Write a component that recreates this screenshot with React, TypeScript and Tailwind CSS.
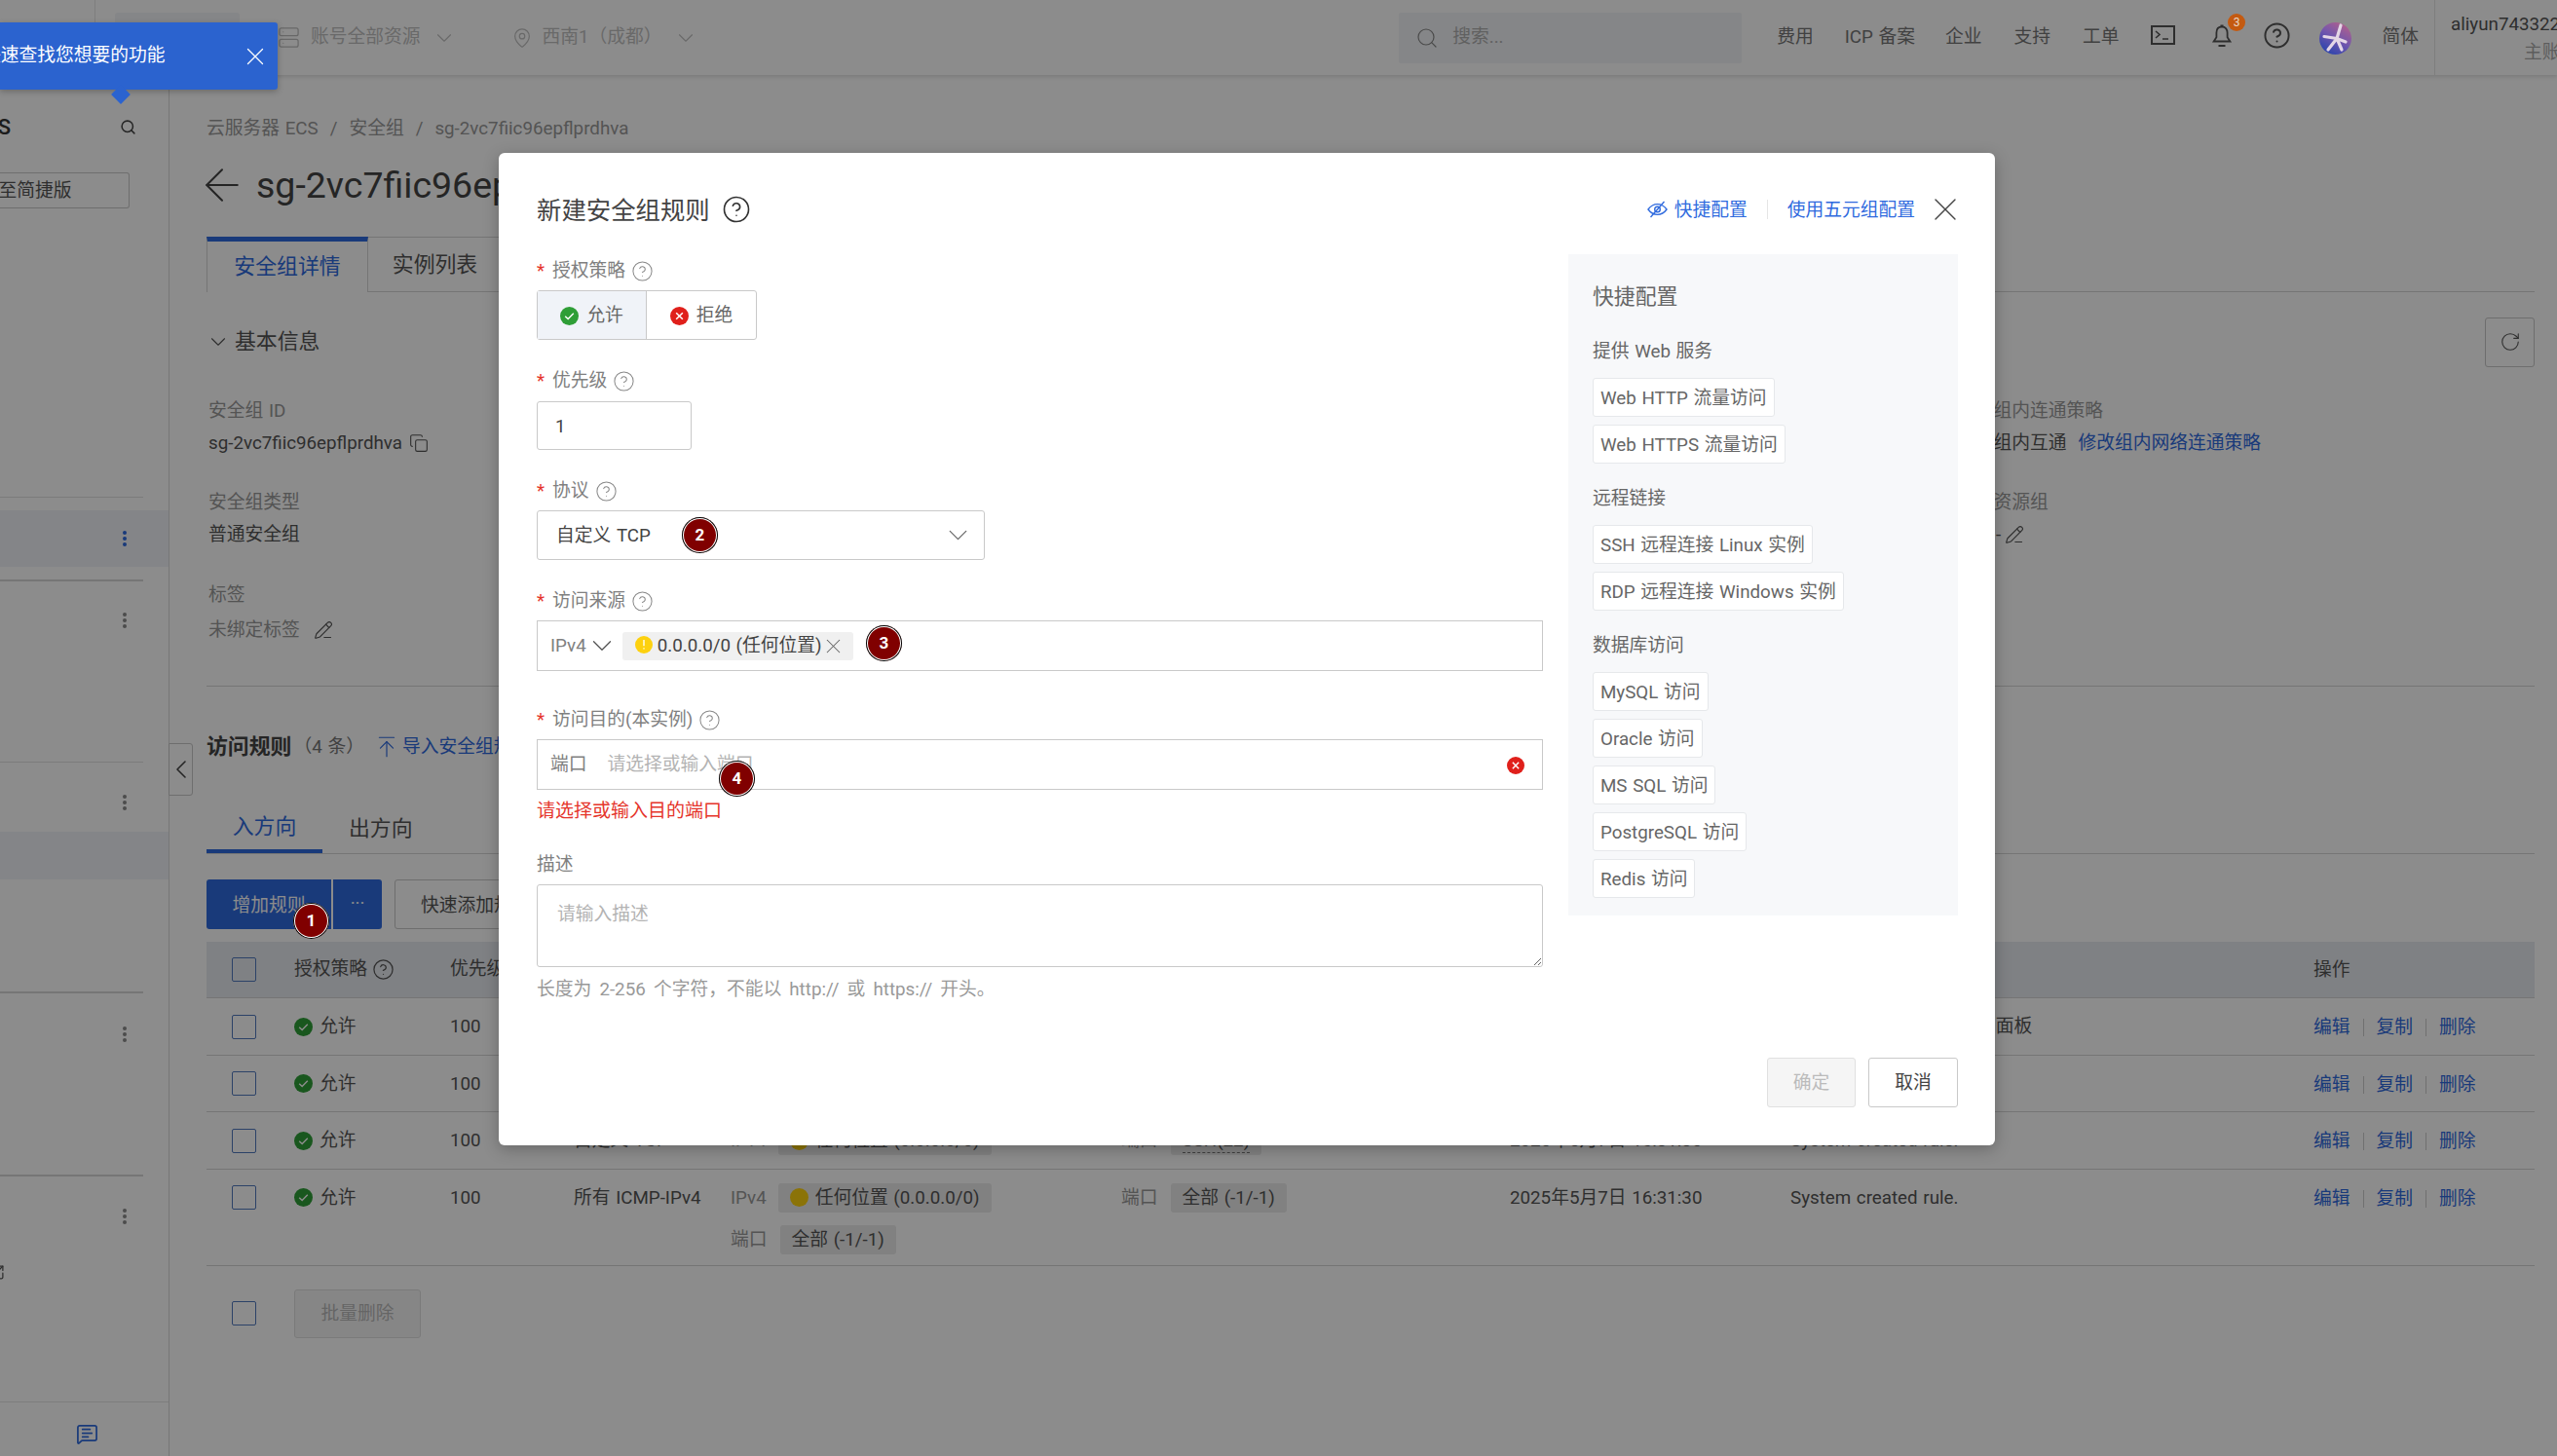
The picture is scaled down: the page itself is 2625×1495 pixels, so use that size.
import {
  ArrowLeft, ArrowUpToLine, ChevronDown, ChevronLeft, CircleHelp, Copy, MapPin,
  MessageSquareText, PencilLine, RotateCw, Search, Server, SquareArrowOutUpRight, X,
} from "lucide-react";

const rules = [
  { proto: "自定义 TCP", port: "RDP(3389)", desc: "System created rule 控制面板" },
  { proto: "自定义 TCP", port: "HTTP(80)", desc: "System created rule." },
  { proto: "自定义 TCP", port: "SSH(22)", desc: "System created rule." },
  { proto: "所有 ICMP-IPv4", port: "全部 (-1/-1)", desc: "System created rule.", extra: true },
];

const quick = [
  { title: "提供 Web 服务", items: ["Web HTTP 流量访问", "Web HTTPS 流量访问"] },
  { title: "远程链接", items: ["SSH 远程连接 Linux 实例", "RDP 远程连接 Windows 实例"] },
  { title: "数据库访问", items: ["MySQL 访问", "Oracle 访问", "MS SQL 访问", "PostgreSQL 访问", "Redis 访问"] },
];

function CheckDot({ size = 19 }: { size?: number }) {
  return (
    <svg width={size} height={size} viewBox="0 0 20 20" className="shrink-0">
      <circle cx="10" cy="10" r="10" fill="#2f9e37" />
      <path d="M5.5 10.2l3.1 3 5.9-6" fill="none" stroke="#fff" strokeWidth="1.5" />
    </svg>
  );
}

function CrossDot({ size = 19 }: { size?: number }) {
  return (
    <svg width={size} height={size} viewBox="0 0 20 20" className="shrink-0">
      <circle cx="10" cy="10" r="10" fill="#e0201b" />
      <path d="M6.5 6.5l7 7M13.5 6.5l-7 7" fill="none" stroke="#fff" strokeWidth="1.6" />
    </svg>
  );
}

function WarnDot() {
  return (
    <svg width="18" height="18" viewBox="0 0 20 20" className="-mt-[3px] shrink-0">
      <circle cx="10" cy="10" r="10" fill="#fdd10f" />
      <path d="M10 4.5v7M10 13.5v1.6" fill="none" stroke="#fff" strokeWidth="1.5" />
    </svg>
  );
}

function Kebab({ blue }: { blue?: boolean }) {
  const dot = blue ? "size-[4px] rounded-full bg-[#2f6ade]" : "size-[4px] rounded-full bg-[#8a8a8a]";
  return (
    <div className="flex flex-col gap-[2px]">
      <span className={dot} />
      <span className={dot} />
      <span className={dot} />
    </div>
  );
}

function Check() {
  return <span className="block h-[25px] w-[25px] rounded-[2px] border-[1.5px] border-[#5179bd]" />;
}

function Tag({ children, dashed }: { children: React.ReactNode; dashed?: boolean }) {
  return (
    <span className="flex h-[30px] items-center gap-[7px] rounded-[3px] bg-[#ebebeb] px-[12px] whitespace-nowrap text-[#555]">
      {dashed ? <span className="border-b border-dashed border-[#777] leading-[24px]">{children}</span> : children}
    </span>
  );
}

function Badge({ n, className }: { n: number; className: string }) {
  return (
    <span
      className={
        "absolute z-30 flex size-[37px] items-center justify-center rounded-full bg-[#800000] text-[17px] font-bold text-white shadow-[inset_0_0_0_1px_#000,inset_0_0_0_2px_#fff] " +
        className
      }
    >
      {n}
    </span>
  );
}

function Sidebar() {
  return (
    <aside className="flex h-full w-[174px] shrink-0 flex-col overflow-hidden border-r border-[#d9d9d9] text-[#555]">
      <div className="mt-[38px] flex h-[30px] items-center">
        <div className="flex w-[11px] justify-end whitespace-nowrap text-[22px] font-medium text-[#333]">云服务器 ECS</div>
        <Search size={17} strokeWidth={2.2} className="ml-[112px] text-[#444]" />
      </div>
      <div className="mt-[32px] flex h-[37px] w-[133px] items-center overflow-hidden rounded-r-[3px] border-y border-r border-[#c8c8c8] pt-[2px]">
        <span className="-ml-[39px] whitespace-nowrap">切换至简捷版</span>
      </div>
      <div className="mt-[296px] h-px w-[147px] bg-[#e0e0e0]" />
      <div className="mt-[13px] flex h-[58px] items-center justify-end bg-[#f0f3f8] pr-[43px]"><Kebab blue /></div>
      <div className="mt-[13px] h-[2px] w-[147px] bg-[#d8d8d8]" />
      <div className="mt-[11px] flex h-[58px] items-center justify-end pr-[43px]"><Kebab /></div>
      <div className="mt-[116px] h-px w-[147px] bg-[#e0e0e0]" />
      <div className="mt-[12px] flex h-[58px] items-center justify-end pr-[43px]"><Kebab /></div>
      <div className="mt-px h-[49px] bg-[#f0f3f8]" />
      <div className="mt-[115px] h-[2px] w-[147px] bg-[#d8d8d8]" />
      <div className="mt-[13px] flex h-[58px] items-center justify-end pr-[43px]"><Kebab /></div>
      <div className="mt-[115px] h-[2px] w-[147px] bg-[#d8d8d8]" />
      <div className="mt-[12px] flex h-[58px] items-center justify-end pr-[43px]"><Kebab /></div>
      <SquareArrowOutUpRight size={17} strokeWidth={1.8} className="mt-[20px] -ml-[12px]" />
      <div className="mt-auto flex h-[56px] items-center justify-end border-t border-[#e5e5e5] pt-[10px] pr-[72px]">
        <MessageSquareText size={23} strokeWidth={1.8} className="text-[#2f6ade]" />
      </div>
    </aside>
  );
}

function TopBar() {
  return (
    <header className="relative z-10 flex h-[77px] shrink-0 items-center bg-white text-[18.75px] text-[#777] shadow-[0_2px_4px_rgba(0,0,0,0.12)]">
      <div className="h-full w-[98px] border-r border-[#e5e5e5]" />
      <div className="ml-[20px] h-[52px] w-[128px] rounded-[3px] bg-[#f2f4f7]" />
      <Server size={23} strokeWidth={1.3} className="ml-[39px] text-[#bdbdbd]" />
      <span className="ml-[11px] text-[#c0c0c0]">账号全部资源</span>
      <ChevronDown size={26} strokeWidth={1} className="ml-[11px] text-[#c0c0c0]" />
      <MapPin size={22} strokeWidth={1.3} className="ml-[56px] text-[#c0c0c0]" />
      <span className="ml-[10px] text-[#c0c0c0]">西南1（成都）</span>
      <ChevronDown size={26} strokeWidth={1} className="ml-[11px] text-[#c0c0c0]" />
      <div className="ml-auto flex h-[52px] w-[352px] items-center rounded-[2px] bg-[#f2f4f7] pl-[17px] text-[#b0b0b0]">
        <Search size={24} strokeWidth={1.2} className="text-[#888]" />
        <span className="ml-[14px]">搜索...</span>
      </div>
      <span className="ml-[36px]">费用</span>
      <span className="ml-[32px]">ICP 备案</span>
      <span className="ml-[31px]">企业</span>
      <span className="ml-[33px]">支持</span>
      <span className="ml-[33px]">工单</span>
      <svg width="25" height="20" viewBox="0 0 25 20" className="ml-[32px] -mt-[5px] text-[#555]" fill="none" stroke="currentColor" strokeWidth="2">
        <rect x="1" y="1" width="23" height="18" />
        <path d="M5 6l4 3.5L5 13M12 14h6" strokeWidth="1.6" />
      </svg>
      <svg width="22" height="26" viewBox="0 0 22 26" className="ml-[37px] -mt-[5px] text-[#555]" fill="none" stroke="currentColor" strokeWidth="1.8">
        <path d="M11 4.5c-3.8 0-5.6 2.8-5.6 6.2v4.5L2.6 19.5h16.8l-2.8-4.3v-4.500c0-3.400-1.800-6.200-5.600-6.200z" />
        <path d="M9.5 3.5h3M7.5 24h7" />
      </svg>
      <CircleHelp size={29} strokeWidth={1.6} className="ml-[31px] -mt-[4px] text-[#555]" />
      <div className="ml-[29px] size-[34px]" />
      <span className="ml-[31px]">简体</span>
      <div className="ml-[16px] h-full w-[126px] overflow-hidden border-l border-[#e5e5e5] pl-[16px]">
        <div className="mt-[12px] whitespace-nowrap leading-[26px] text-[#555]">aliyun7433224</div>
        <div className="mt-[2px] pl-[75px] whitespace-nowrap text-[#aaa]">主账号</div>
      </div>
    </header>
  );
}

function RulesTable() {
  const cols = "grid grid-cols-[90px_160px_127px_161px_401px_399px_288px_537px_1fr]";
  return (
    <div>
      <div className={cols + " h-[58px] items-center border-b border-[#d5d5d5] bg-[#e8ebf0] text-[#555]"}>
        <div className="pl-[26px]"><Check /></div>
        <div className="flex items-center gap-[5px]">授权策略 <CircleHelp size={23} strokeWidth={1.3} /></div>
        <div>优先级</div>
        <div>协议类型</div>
        <div>访问来源</div>
        <div>访问目的</div>
        <div>创建时间</div>
        <div>描述</div>
        <div className="pt-[2px]">操作</div>
      </div>
      {rules.map((r) => (
        <div
          key={r.port}
          className={cols + " items-start border-b border-[#d5d5d5] pt-[14px] text-[#555] " + (r.extra ? "pb-[12px]" : "pb-[13.67px]")}
        >
          <div className="flex h-[30px] items-center pl-[26px]"><Check /></div>
          <div className="flex h-[30px] items-center gap-[7px]"><CheckDot /> 允许</div>
          <div className="flex h-[30px] items-center">100</div>
          <div className="flex h-[30px] items-center">{r.proto}</div>
          <div className="flex flex-col gap-[13px]">
            <div className="flex h-[30px] items-center gap-[12px]">
              <span className="text-[#999]">IPv4</span>
              <Tag>
                <span className="block size-[19px] rounded-full bg-[#fdd10f]" />
                任何位置 (0.0.0.0/0)
              </Tag>
            </div>
            {r.extra && (
              <div className="-mb-px flex h-[30px] items-center gap-[13px]">
                <span className="text-[#999]">端口</span>
                <Tag>全部 (-1/-1)</Tag>
              </div>
            )}
          </div>
          <div className="flex h-[30px] items-center gap-[13px]">
            <span className="text-[#999]">端口</span>
            <Tag dashed={r.port === "SSH(22)"}>{r.extra ? "全部 (-1/-1)" : r.port}</Tag>
          </div>
          <div className="flex h-[30px] items-center">2025年5月7日 16:31:30</div>
          <div className="flex h-[30px] items-center">{r.desc}</div>
          <div className="flex h-[30px] items-center pt-[2px] text-[#2f6ade]">
            <span>编辑</span>
            <span className="mx-[13px] h-[18px] w-px bg-[#ccc]" />
            <span>复制</span>
            <span className="mx-[13px] h-[18px] w-px bg-[#ccc]" />
            <span>删除</span>
          </div>
        </div>
      ))}
      <div className="mt-[24px] flex h-[50px] items-center">
        <div className="w-[90px] pl-[26px]"><Check /></div>
        <div className="flex h-[50px] w-[130px] items-center justify-center rounded-[3px] border border-[#dedede] bg-[#f5f5f5] text-[#b8b8b8]">批量删除</div>
      </div>
    </div>
  );
}

function MainContent() {
  return (
    <main className="relative min-w-0 flex-1 pr-[23px] pl-[38px] text-[#555]">
      <button className="absolute top-[686px] -left-px flex h-[54px] w-[25px] items-center justify-center rounded-r-[3px] border border-[#c8c8c8] bg-white">
        <ChevronLeft size={32} strokeWidth={1.2} className="shrink-0 text-[#444]" />
      </button>
      <div className="mt-[40px] flex h-[30px] items-center gap-[12px] text-[#999]">
        <span>云服务器 ECS</span><span>/</span><span>安全组</span><span>/</span><span>sg-2vc7fiic96epflprdhva</span>
      </div>
      <div className="mt-[18px] flex h-[50px] items-center text-[37.5px] text-[#444]">
        <ArrowLeft size={54} strokeWidth={0.9} className="-ml-[11px] shrink-0" />
        <span className="ml-[8px]">sg-2vc7fiic96epflprdhva</span>
      </div>
      <div className="mt-[28px] flex h-[57px] border-b border-[#d5d5d5] text-[21.875px]">
        <div className="flex h-[57px] w-[166px] items-center justify-center border-x border-t-[5px] border-x-[#d5d5d5] border-t-[#2f6ade] bg-white text-[#2f6ade]">安全组详情</div>
        <div className="flex h-[57px] w-[138px] items-center justify-center border-t border-r border-[#d5d5d5]">实例列表</div>
      </div>
      <div className="mt-[36px] flex h-[30px] items-center justify-between">
        <div className="flex items-center text-[21.875px]">
          <ChevronDown size={26} strokeWidth={1} className="-ml-[1px]" />
          <span className="ml-[4px]">基本信息</span>
        </div>
        <div className="flex size-[51px] items-center justify-center rounded-[3px] border border-[#c8c8c8]">
          <RotateCw size={22} strokeWidth={1.2} />
        </div>
      </div>
      <div className="mt-[44px] grid h-[294px] grid-cols-[1795px_1fr] pl-[2px]">
        <div>
          <div className="h-[24px] leading-[24px] text-[#999]">安全组 ID</div>
          <div className="mt-[9px] flex h-[24px] items-center gap-[7px]">sg-2vc7fiic96epflprdhva <Copy size={20} strokeWidth={1.3} /></div>
          <div className="mt-[37px] h-[24px] leading-[24px] text-[#999]">安全组类型</div>
          <div className="mt-[9px] h-[24px] leading-[24px]">普通安全组</div>
          <div className="mt-[38px] h-[24px] leading-[24px] text-[#999]">标签</div>
          <div className="mt-[12px] flex h-[24px] items-center gap-[14px] text-[#999]">未绑定标签 <PencilLine size={20} strokeWidth={1.4} className="text-[#555]" /></div>
        </div>
        <div>
          <div className="h-[24px] leading-[24px] text-[#999]">安全组内连通策略</div>
          <div className="mt-[9px] flex h-[24px] items-center gap-[12px]">安全组内互通 <span className="text-[#2f6ade]">修改组内网络连通策略</span></div>
          <div className="mt-[37px] h-[24px] leading-[24px] text-[#999]">所属资源组</div>
          <div className="mt-[9px] flex h-[24px] items-center gap-[4px] pl-[40px]">- <PencilLine size={20} strokeWidth={1.4} /></div>
        </div>
      </div>
      <div className="h-px bg-[#d5d5d5]" />
      <div className="mt-[47px] flex h-[30px] items-center">
        <span className="text-[21.875px] font-semibold text-[#444]">访问规则</span>
        <span className="ml-[2px] text-[#777]">（4 条）</span>
        <ArrowUpToLine size={26} strokeWidth={1.1} className="ml-[10px] text-[#2f6ade]" />
        <span className="ml-[3px] text-[#2f6ade]">导入安全组规则</span>
      </div>
      <div className="mt-[43px] flex h-[52px] border-b border-[#d5d5d5] pt-[2px] text-[21.875px]">
        <div className="flex w-[119px] items-center justify-center border-b-[4px] border-[#2f6ade] text-[#2f6ade]">入方向</div>
        <div className="ml-[27px] flex items-center">出方向</div>
      </div>
      <div className="mt-[26px] flex h-[51px] items-center">
        <div className="flex h-[51px] w-[128px] items-center justify-center rounded-l-[3px] bg-[#2f6ade] pt-[3px] text-white">增加规则</div>
        <div className="ml-[2px] flex h-[51px] w-[50px] items-center justify-center rounded-r-[3px] bg-[#2f6ade] text-white">···</div>
        <div className="ml-[13px] flex h-[51px] w-[180px] items-center rounded-[3px] border border-[#c8c8c8] pt-[3px] pl-[26px] whitespace-nowrap">快速添加规则</div>
      </div>
      <div className="mt-[13px]"><RulesTable /></div>
    </main>
  );
}

function FormLabel({ text, required = true, help = true, className = "" }: { text: string; required?: boolean; help?: boolean; className?: string }) {
  return (
    <div className={"flex h-[24px] items-center text-[#808080] " + className}>
      {required && <span className="w-[16px] text-[#e5352b]">*</span>}
      <span>{text}</span>
      {help && <CircleHelp size={23} strokeWidth={1.05} className="ml-[6px] text-[#888]" />}
    </div>
  );
}

function RuleDialog() {
  return (
    <section className="absolute top-[157px] left-[512px] z-20 flex h-[1019px] w-[1536px] flex-col rounded-[6px] bg-white pr-[38px] pb-[39px] pl-[39px] text-[18.75px] shadow-[0_4px_16px_rgba(0,0,0,0.25)]">
      <div className="mt-[38px] flex h-[40px] items-center">
        <h2 className="pt-[2px] text-[25.4px] text-[#444]">新建安全组规则</h2>
        <CircleHelp size={30} strokeWidth={1.3} className="ml-[12px] text-[#333]" />
        <svg width="21" height="18" viewBox="0 0 21 18" className="ml-auto text-[#2f6ade]" fill="none" stroke="currentColor" strokeWidth="1.4">
          <path d="M1 9c2.6-3.6 5.7-5.4 9.5-5.4S17.400 5.400 20 9c-2.600 3.600-5.700 5.400-9.500 5.400S3.600 12.600 1 9z" />
          <circle cx="10.500" cy="9" r="2.800" />
          <path d="M3.500 17L17.500 1" />
        </svg>
        <span className="ml-[7px] pt-[2px] text-[#2f6ade]">快捷配置</span>
        <span className="mx-[20px] h-[20px] w-px bg-[#e5e5e5]" />
        <span className="pt-[2px] text-[#2f6ade]">使用五元组配置</span>
        <X size={40} strokeWidth={0.8} className="mr-[-7px] ml-[11px] -mt-[1px] shrink-0 text-[#444]" />
      </div>
      <div className="mt-[26px] flex gap-[26px]">
        <div className="w-[1033px] shrink-0 pt-[5px]">
          <FormLabel text="授权策略" className="pt-[1px]" />
          <div className="mt-[8px] flex h-[51px] w-[226px] rounded-[3px] border border-[#c9c9c9] pt-px text-[#666]">
            <div className="-mt-px flex w-[112px] items-center justify-center gap-[8px] border-r border-[#c9c9c9] bg-[#f0f3f8] pt-[2px]"><CheckDot /> 允许</div>
            <div className="-mt-px flex flex-1 items-center justify-center gap-[8px] pt-[2px]"><CrossDot /> 拒绝</div>
          </div>
          <FormLabel text="优先级" className="mt-[30px] pt-[1px]" />
          <div className="mt-[9px] flex h-[50px] w-[159px] items-center rounded-[3px] border border-[#c9c9c9] pt-[2px] pl-[18px] text-[#444]">1</div>
          <FormLabel text="协议" className="mt-[30px]" />
          <div className="mt-[8px] flex h-[51px] w-[460px] items-center justify-between rounded-[3px] border border-[#c9c9c9] pr-[10px] pl-[19px] text-[#444]">
            <span className="pt-[2px]">自定义 TCP</span>
            <ChevronDown size={33} strokeWidth={0.9} className="text-[#666]" />
          </div>
          <FormLabel text="访问来源" className="mt-[30px]" />
          <div className="mt-[8px] flex h-[52px] items-center border border-[#c9c9c9] pl-[13px]">
            <span className="text-[#808080]">IPv4</span>
            <ChevronDown size={34} strokeWidth={0.9} className="-mx-[1px] text-[#555]" />
            <div className="ml-[5px] flex h-[29px] w-[237px] items-center rounded-[3px] bg-[#f0f0f0] pl-[13px] text-[#444]">
              <WarnDot />
              <span className="ml-[5px] whitespace-nowrap">0.0.0.0/0 (任何位置)</span>
              <X size={25} strokeWidth={1} className="-ml-[1px] text-[#666]" />
            </div>
          </div>
          <FormLabel text="访问目的(本实例)" className="mt-[38px]" />
          <div className="mt-[8px] flex h-[52px] items-center border border-[#c9c9c9] pt-[1px] pr-[18px] pl-[13px]">
            <span className="text-[#808080]">端口</span>
            <span className="ml-[21px] text-[#b3b3b3]">请选择或输入端口</span>
            <span className="ml-auto"><CrossDot size={18} /></span>
          </div>
          <div className="mt-[10px] h-[24px] text-[19px] leading-[24px] text-[#e5352b]">请选择或输入目的端口</div>
          <FormLabel text="描述" required={false} help={false} className="mt-[31px] pt-[1px]" />
          <textarea
            placeholder="请输入描述"
            className="mt-[8px] block h-[85px] w-full rounded-[3px] border border-[#c9c9c9] px-[20px] py-[16px] text-[18.75px] placeholder:text-[#b3b3b3]"
          />
          <div className="mt-[11px] h-[24px] leading-[24px] text-[#999] [word-spacing:3.5px]">长度为 2-256 个字符，不能以 http:// 或 https:// 开头。</div>
        </div>
        <div className="h-[679px] w-[400px] bg-[#f7f8fa] pt-[30px] pl-[25px] text-[#666]">
          <h3 className="flex h-[28px] items-center text-[21.875px] text-[#666]">快捷配置</h3>
          {quick.map((g, i) => (
            <div key={g.title} className={i === 0 ? "mt-[30px]" : "mt-[24px]"}>
              <div className="flex h-[24px] items-center pt-[1px]">{g.title}</div>
              <div className="mt-[15px] flex flex-col items-start gap-[8px]">
                {g.items.map((it) => (
                  <div key={it} className="flex h-[40px] items-center rounded-[3px] border border-[#e6e8eb] bg-white px-[7px] pt-[2px] whitespace-nowrap">{it}</div>
                ))}
              </div>
            </div>
          ))}
        </div>
      </div>
      <div className="mt-auto flex justify-end gap-[13px]">
        <div className="flex h-[51px] w-[91px] items-center justify-center rounded-[3px] border border-[#e0e0e0] bg-[#f5f5f5] pt-[2px] text-[#bbb]">确定</div>
        <div className="flex h-[51px] w-[92px] items-center justify-center rounded-[3px] border border-[#c9c9c9] pt-[2px] text-[#444]">取消</div>
      </div>
    </section>
  );
}

export default function App() {
  return (
    <div className="relative flex h-screen w-screen flex-col overflow-hidden bg-white font-['Roboto','Noto_Sans_CJK_SC',sans-serif] text-[18.75px] [word-spacing:1px]">
      <TopBar />
      <div className="flex min-h-0 flex-1">
        <Sidebar />
        <MainContent />
      </div>
      <div className="absolute inset-0 z-10 bg-black/45" />
      <RuleDialog />
      <div className="absolute top-[23px] left-0 z-20 flex h-[69px] w-[285px] items-center justify-end rounded-r-[3px] bg-[#2b63cf] pr-[8px] text-white shadow-[0_2px_6px_rgba(0,0,0,0.25)]">
        <div className="flex-1 overflow-hidden"><span className="-ml-[18px] block whitespace-nowrap">快速查找您想要的功能</span></div>
        <X size={30} strokeWidth={1} />
        <span className="absolute top-[67px] left-[117px] size-[14px] rotate-45 bg-[#2b63cf]" />
      </div>
      <span className="absolute top-[14px] left-[2287px] z-20 flex size-[18px] items-center justify-center rounded-full bg-[#c45a10] text-[12px] leading-none text-[#e8d8c8]">3</span>
      <svg width="33" height="33" viewBox="0 0 33 33" className="absolute top-[23px] left-[2381px] z-20">
        <defs>
          <linearGradient id="av" x1="0.9" y1="0.1" x2="0.35" y2="1">
            <stop offset="0" stopColor="#b0608c" />
            <stop offset="0.5" stopColor="#7256ad" />
            <stop offset="1" stopColor="#2f45ad" />
          </linearGradient>
        </defs>
        <circle cx="16.500" cy="16.500" r="16.500" fill="url(#av)" />
        <path d="M18 16.500L22 3M18 16.500L27 20M18 16.500L5 14.500M18 16.500L9 28M18 16.500L23 28" fill="none" stroke="#e4d6e6" strokeWidth="3.200" strokeLinecap="round" />
      </svg>
      <Badge n={1} className="top-[927px] left-[301px]" />
      <Badge n={2} className="top-[531px] left-[700px]" />
      <Badge n={3} className="top-[642px] left-[889px]" />
      <Badge n={4} className="top-[781px] left-[738px]" />
    </div>
  );
}
